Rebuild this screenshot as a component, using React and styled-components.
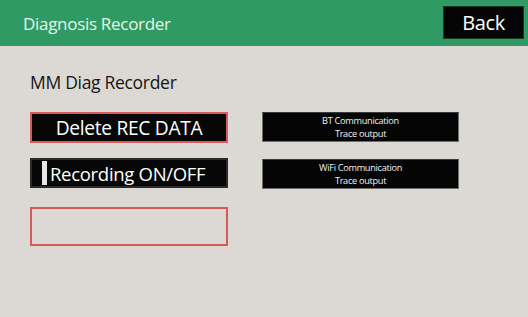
import React from 'react';
import styled, { createGlobalStyle } from 'styled-components';

const Global = createGlobalStyle`
  html, body {
    margin: 0;
    padding: 0;
    background: #dcd9d4;
    font-family: "Open Sans", "Noto Sans", sans-serif;
  }
`;

const Screen = styled.div`
  width: 528px;
  height: 317px;
  background: #dcd9d4;
  overflow: hidden;
`;

const Header = styled.div`
  display: flex;
  align-items: center;
  justify-content: space-between;
  height: 46px;
  padding: 0 4px 0 23px;
  box-sizing: border-box;
  background: #2f9a63;
`;

const Title = styled.span`
  color: #e6f6ea;
  font-size: 17px;
  letter-spacing: -0.3px;
`;

const BackButton = styled.div`
  display: flex;
  align-items: center;
  justify-content: center;
  width: 81px;
  height: 33px;
  margin-top: -1px;
  background: #050505;
  border: 1px solid #1a3a28;
  box-sizing: border-box;
  color: #ffffff;
  font-size: 20px;
  letter-spacing: -0.4px;
`;

const Body = styled.div`
  padding: 24px 0 0 30px;
`;

const Section = styled.div`
  color: #141414;
  font-size: 17.5px;
  letter-spacing: -0.3px;
  line-height: 24px;
`;

const Columns = styled.div`
  display: flex;
  gap: 34px;
  margin-top: 18px;
`;

const Column = styled.div`
  display: flex;
  flex-direction: column;
  gap: ${p => p.$gap}px;
`;

const MainButton = styled.div`
  display: flex;
  align-items: center;
  justify-content: ${p => (p.$left ? 'flex-start' : 'center')};
  gap: 3px;
  width: 198px;
  height: ${p => p.$h}px;
  padding-left: ${p => (p.$left ? 10 : 0)}px;
  box-sizing: border-box;
  background: #070707;
  border: 2px solid ${p => (p.$active ? '#d95a5a' : '#2a2a2a')};
  color: #ffffff;
  font-size: ${p => p.$size}px;
  letter-spacing: -0.3px;
`;

const Indicator = styled.span`
  width: 5px;
  height: 24px;
  background: #e6e6e6;
`;

const EmptySlot = styled.div`
  width: 198px;
  height: 39px;
  box-sizing: border-box;
  border: 2px solid #d55a5c;
`;

const TraceButton = styled.div`
  display: flex;
  flex-direction: column;
  align-items: center;
  justify-content: center;
  width: 197px;
  height: 30px;
  box-sizing: border-box;
  background: #050505;
  border: 1px solid #6e6e6e;
  border-top-color: #3a3a3a;
  color: #f2f2f2;
  font-size: 9.2px;
  line-height: 13px;
  letter-spacing: -0.3px;
`;

export default function App() {
  return (
    <Screen>
      <Global />
      <Header>
        <Title>Diagnosis Recorder</Title>
        <BackButton>Back</BackButton>
      </Header>
      <Body>
        <Section>MM Diag Recorder</Section>
        <Columns>
          <Column $gap={15}>
            <MainButton $active $h={31} $size={19.2}>Delete REC DATA</MainButton>
            <Column $gap={19}>
              <MainButton $left $h={30} $size={18.5}>
                <Indicator />
                <span>Recording ON/OFF</span>
              </MainButton>
              <EmptySlot />
            </Column>
          </Column>
          <Column $gap={17}>
            <TraceButton>
              <span>BT Communication</span>
              <span>Trace output</span>
            </TraceButton>
            <TraceButton>
              <span>WiFi Communication</span>
              <span>Trace output</span>
            </TraceButton>
          </Column>
        </Columns>
      </Body>
    </Screen>
  );
}
